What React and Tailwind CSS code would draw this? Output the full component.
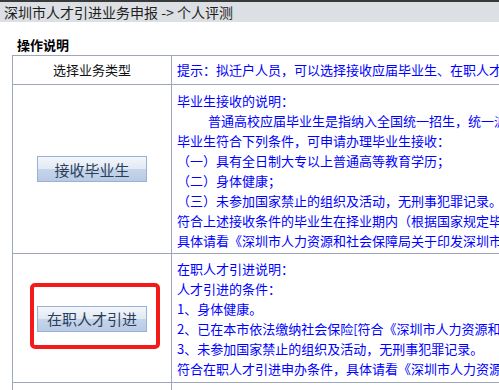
const font = { fontFamily: '"Noto Sans CJK SC", "Noto Sans", sans-serif' };

const ActionButton = ({ children }) => (
  <button
    type="button"
    className="flex h-[26px] w-[110px] items-center justify-center border border-[#98b1d4] bg-[linear-gradient(to_bottom,#f3f6fb_0%,#e2e9f3_50%,#c5d5eb_50%,#b9cbe4_100%)] text-[15px] leading-none text-[#2b3f5a]"
  >
    {children}
  </button>
);

const graduateLines = [
  '毕业生接收的说明：',
  null,
  '毕业生符合下列条件，可申请办理毕业生接收：',
  '（一）具有全日制大专以上普通高等教育学历；',
  '（二）身体健康；',
  '（三）未参加国家禁止的组织及活动，无刑事犯罪记录。',
  '符合上述接收条件的毕业生在择业期内（根据国家规定毕业生择业期为二年）',
  '具体请看《深圳市人力资源和社会保障局关于印发深圳市毕业生接收实施办法的通知》',
];

const talentLines = [
  '在职人才引进说明：',
  '人才引进的条件：',
  '1、身体健康。',
  '2、已在本市依法缴纳社会保险[符合《深圳市人力资源和社会保障局关于调整人才引进条件的通知》]',
  '3、未参加国家禁止的组织及活动，无刑事犯罪记录。',
  '符合在职人才引进申办条件，具体请看《深圳市人力资源和社会保障局关于在职人才引进的通知》',
];

export default function App() {
  return (
    <div className="h-[390px] w-[499px] overflow-hidden bg-white" style={font}>
      {/* Title bar */}
      <div className="h-[22px] border-t-2 border-[#3a3a3a] bg-[#dcdfe3] pl-[4px] text-[14px] leading-[20px] whitespace-nowrap text-[#1e1e1e]">
        深圳市人才引进业务申报 -&gt; 个人评测
      </div>

      <div className="h-[33px] pl-[17px] pt-[14px] text-[13px] font-bold leading-[18px] text-black">操作说明</div>

      {/* Table */}
      <div className="ml-[12px] w-[900px] border-l border-t border-[#9ea6ba] text-[13px] leading-[20px]">
        <div className="flex h-[29px] border-b border-[#9ea6ba]">
          <div className="w-[159px] shrink-0 border-r border-[#9ea6ba] pt-[4px] text-center text-[#111]">选择业务类型</div>
          <div className="pl-[5px] pt-[4px] whitespace-nowrap text-[#0000ff]">
            提示：拟迁户人员，可以选择接收应届毕业生、在职人才引进业务类型。
          </div>
        </div>

        <div className="flex h-[169px] border-b border-[#9ea6ba]">
          <div className="flex w-[159px] shrink-0 items-center justify-center border-r border-[#9ea6ba]">
            <ActionButton>接收毕业生</ActionButton>
          </div>
          <div className="pl-[5px] pt-[6px] pb-[2px] whitespace-nowrap text-[#0000ff]">
            {graduateLines.map((line, i) =>
              line ? (
                <div key={i}>{line}</div>
              ) : (
                <div key={i} className="pl-[31px]">
                  普通高校应届毕业生是指纳入全国统一招生，统一派遣的全日制普通高等院校应届毕业生。
                </div>
              )
            )}
          </div>
        </div>

        <div className="flex h-[129px] border-b border-[#9ea6ba]">
          <div className="flex w-[159px] shrink-0 items-center border-r border-[#9ea6ba] pl-[17px]">
            <div className="mt-[-5px] rounded-[5px] border-4 border-[#f41a1a] pt-[19px] pr-[9px] pb-[13px] pl-[3px]">
              <ActionButton>在职人才引进</ActionButton>
            </div>
          </div>
          <div className="pl-[5px] pt-[5px] pb-[3px] whitespace-nowrap text-[#0000ff]">
            {talentLines.map((line, i) => (
              <div key={i}>{line}</div>
            ))}
          </div>
        </div>

        <div className="flex h-[40px]">
          <div className="w-[159px] shrink-0 border-r border-[#9ea6ba]" />
          <div />
        </div>
      </div>
    </div>
  );
}
